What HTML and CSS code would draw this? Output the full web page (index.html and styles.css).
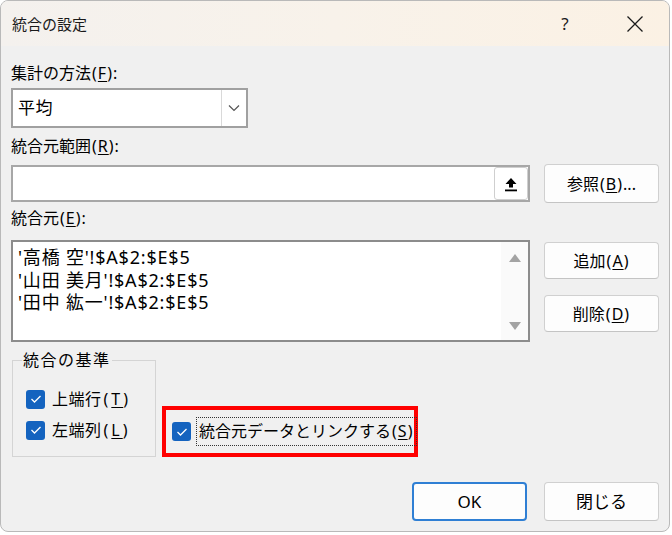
FILE: index.html
```html
<!DOCTYPE html>
<html lang="ja">
<head>
<meta charset="utf-8">
<title>統合の設定</title>
<link rel="stylesheet" href="styles.css">
</head>
<body>
<div class="dialog">
  <div class="titlebar">
    <span class="title">統合の設定</span>
    <span class="tb-btn help">?</span>
    <span class="tb-btn close">
      <svg width="18" height="18" viewBox="0 0 18 18"><path d="M1.5 1.5 L16.5 16.5 M16.5 1.5 L1.5 16.5" stroke="#1a1a1a" stroke-width="1.3" fill="none"/></svg>
    </span>
  </div>
  <div class="body">
    <div class="label">集計の方法<span class="key">(<u>F</u>)</span>:</div>
    <div class="combo">
      <span class="combo-text">平均</span>
      <span class="combo-btn">
        <svg width="12" height="8" viewBox="0 0 12 8"><path d="M1 1.5 L6 6.5 L11 1.5" stroke="#555" stroke-width="1.2" fill="none"/></svg>
      </span>
    </div>

    <div class="label gap8">統合元範囲<span class="key">(<u>R</u>)</span>:</div>
    <div class="row row-range">
      <div class="range">
        <span class="range-btn">
          <svg width="14" height="16" viewBox="0 0 14 16"><path d="M7 2 L1.5 8 H5 V11.5 H9 V8 H12.5 Z" fill="#000"/><rect x="1" y="13.5" width="12" height="1.8" fill="#000"/></svg>
        </span>
      </div>
      <button class="btn side">参照<span class="key">(<u>B</u>)</span>...</button>
    </div>

    <div class="label gap5">統合元<span class="key">(<u>E</u>)</span>:</div>
    <div class="row row-list">
      <div class="list">
        <div class="list-items">
          <div class="item">'高橋 空'!$A$2:$E$5</div>
          <div class="item">'山田 美月'!$A$2:$E$5</div>
          <div class="item">'田中 紘一'!$A$2:$E$5</div>
        </div>
        <div class="scroll">
          <svg width="14" height="10" viewBox="0 0 14 10"><path d="M7 1 L13 9 H1 Z" fill="#a3a3a3"/></svg>
          <svg width="14" height="10" viewBox="0 0 14 10"><path d="M1 1 H13 L7 9 Z" fill="#a3a3a3"/></svg>
        </div>
      </div>
      <div class="btncol">
        <button class="btn side">追加<span class="key">(<u>A</u>)</span></button>
        <button class="btn side">削除<span class="key">(<u>D</u>)</span></button>
      </div>
    </div>

    <div class="row row-bottom">
      <fieldset class="group">
        <legend>統合の基準</legend>
        <div class="check"><span class="box"><svg width="12" height="10" viewBox="0 0 12 10"><path d="M1.5 5 L4.5 8 L10.5 2" stroke="#fff" stroke-width="1.3" fill="none"/></svg></span><span class="check-text">上端行<span class="key">(<u>T</u>)</span></span></div>
        <div class="check"><span class="box"><svg width="12" height="10" viewBox="0 0 12 10"><path d="M1.5 5 L4.5 8 L10.5 2" stroke="#fff" stroke-width="1.3" fill="none"/></svg></span><span class="check-text">左端列<span class="key">(<u>L</u>)</span></span></div>
      </fieldset>
      <div class="highlight">
        <div class="check"><span class="box"><svg width="12" height="10" viewBox="0 0 12 10"><path d="M1.5 5 L4.5 8 L10.5 2" stroke="#fff" stroke-width="1.3" fill="none"/></svg></span><span class="focus">統合元データとリンクする<span class="key">(<u>S</u>)</span></span></div>
      </div>
    </div>

    <div class="footer">
      <button class="btn ok">OK</button>
      <button class="btn">閉じる</button>
    </div>
  </div>
</div>
</body>
</html>
```

FILE: styles.css
```css
* { box-sizing: border-box; }
html, body { margin: 0; padding: 0; background: #ffffff; }
body {
  font-family: "Noto Sans", "Noto Sans CJK JP", sans-serif;
  color: #000;
  font-size: 16px;
}
u { text-decoration-thickness: 1px; text-underline-offset: 2px; }
.key { letter-spacing: 1px; margin-left: 1px; }

.dialog {
  width: 670px;
  height: 532px;
  border: 1px solid #b9b9b9;
  border-radius: 8px;
  overflow: hidden;
  background: #f0f0f0;
  display: flex;
  flex-direction: column;
}

.titlebar {
  height: 45px;
  flex: none;
  display: flex;
  align-items: center;
  padding: 0 11px 0 11px;
  background: linear-gradient(90deg, #f4f1ee 0%, #f8f2ea 50%, #fbf1e4 100%);
}
.title { flex: 1; font-size: 15px; line-height: 20px; color: #1a1a1a; }
.tb-btn { width: 46px; height: 32px; display: flex; align-items: center; justify-content: center; }
.help { font-size: 17px; margin-right: 24px; color: #1a1a1a; }

.body { padding: 17px 10px 0 10px; flex: 1; }

.label { font-size: 16px; line-height: 20px; height: 20px; white-space: nowrap; }
.gap8 { margin-top: 8px; }
.gap5 { margin-top: 5px; }

.combo {
  margin-top: 5px;
  width: 237px;
  height: 40px;
  background: #fff;
  border: 2px solid #a0a0a0;
  display: flex;
  align-items: stretch;
}
.combo-text { flex: 1; font-size: 17px; line-height: 36px; padding-left: 5px; letter-spacing: 0.5px; }
.combo-btn {
  width: 25px;
  border-left: 1px solid #d9d9d9;
  display: flex;
  align-items: center;
  justify-content: center;
}

.row { display: flex; gap: 14px; }
.row-range { margin-top: 8px; align-items: center; height: 39px; }
.range {
  width: 519px;
  height: 37px;
  background: #fff;
  border: 2px solid #a7a7a7;
  display: flex;
  justify-content: flex-end;
  align-items: stretch;
  padding: 0;
}
.range-btn {
  width: 34px;
  background: #fff;
  border: 1px solid #cfcfcf;
  border-radius: 3px;
  display: flex;
  align-items: center;
  justify-content: center;
}

.btn {
  font-family: inherit;
  font-size: 16px;
  color: #000;
  background: #fdfdfd;
  border: 1px solid #d0d0d0;
  border-bottom-color: #c4c4c4;
  border-radius: 4px;
  height: 39px;
  width: 115px;
  padding: 0;
  line-height: 20px;
  white-space: nowrap;
}
.side { width: 115px; }

.row-list { margin-top: 12px; }
.list {
  width: 519px;
  height: 102px;
  background: #fff;
  border: 2px solid #8c8c8c;
  display: flex;
}
.list-items { flex: 1; padding: 4px 0 0 5px; }
.item { font-size: 18px; line-height: 22.5px; height: 22.5px; white-space: pre; letter-spacing: 0.8px; }
.scroll {
  width: 27px;
  background: #fafafa;
  display: flex;
  flex-direction: column;
  justify-content: space-between;
  align-items: center;
  padding: 11px 0 9px 0;
}
.btncol { display: flex; flex-direction: column; gap: 16px; padding-top: 2px; }
.btncol .btn { height: 37px; }

.row-bottom { gap: 6px; align-items: flex-end; margin-top: 8px; }
.group {
  margin: 0 0 0 1px;
  width: 144px;
  height: 107px;
  border: 1px solid #d4d4d4;
  padding: 17px 0 0 13px;
  display: flex;
  flex-direction: column;
  gap: 7px;
}
.group legend {
  font-size: 16px;
  line-height: 20px;
  padding: 0 1px;
  margin-left: -4px;
  letter-spacing: 1.5px;
}
.check { display: flex; align-items: center; height: 24px; font-size: 16px; line-height: 20px; white-space: nowrap; }
.check-text { letter-spacing: 0.5px; }
.check-text .key { letter-spacing: 3px; margin-left: 2px; }
.box {
  width: 19px;
  height: 19px;
  border-radius: 3px;
  background: #1463bf;
  display: flex;
  align-items: center;
  justify-content: center;
  margin-right: 7px;
  flex: none;
}

.highlight {
  width: 256px;
  height: 51px;
  border: 4px solid #ff0000;
  display: flex;
  align-items: center;
  padding-left: 6px;
}
.highlight .box { margin-right: 5px; }
.focus {
  display: block;
  border: 1px dotted #333;
  height: 29px;
  line-height: 27px;
  padding: 0 3px 0 2px;
  white-space: nowrap;
}

.footer { display: flex; justify-content: flex-end; gap: 17px; margin-top: 25px; }
.footer .btn { width: 115px; height: 39px; font-size: 17px; }
.ok { border: 2px solid #2f7fd4; }
```
